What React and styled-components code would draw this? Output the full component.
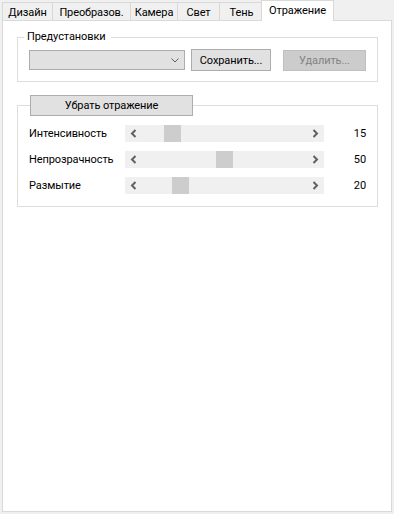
import React from 'react';
import styled, { createGlobalStyle } from 'styled-components';

const GlobalStyle = createGlobalStyle`
  html, body {
    margin: 0;
    padding: 0;
    background: #f0f0f0;
  }
  body {
    color: #000;
    font-family: Roboto, "Noto Sans", sans-serif;
    font-size: 11px;
    letter-spacing: -0.1px;
  }
`;

const Window = styled.div`
  box-sizing: border-box;
  display: flex;
  flex-direction: column;
  height: 514px;
  padding: 0 2px 2px 2px;
  width: 394px;
`;

const TabStrip = styled.div`
  align-items: flex-start;
  display: flex;
  height: 21px;
  margin-bottom: -1px;
  position: relative;
  z-index: 1;
`;

const Tab = styled.div`
  background: ${(p) => (p.$active ? '#fff' : '#f0f0f0')};
  border: 1px solid #d9d9d9;
  border-bottom: none;
  box-sizing: border-box;
  height: ${(p) => (p.$active ? '21px' : '18px')};
  line-height: 19px;
  margin-left: ${(p) => (p.$first ? '0' : p.$active ? '-3px' : '-1px')};
  margin-top: ${(p) => (p.$active ? '0' : '2px')};
  position: relative;
  text-align: center;
  white-space: nowrap;
  width: ${(p) => p.$width}px;
  z-index: ${(p) => (p.$active ? 2 : 1)};
`;

const Panel = styled.div`
  background: #fff;
  border: 1px solid #d9d9d9;
  flex: 1;
  padding: 8px 13px 0 14px;
`;

const GroupBox = styled.fieldset`
  border: 1px solid #dcdcdc;
  margin: 0 0 ${(p) => p.$gap || 0}px 0;
  min-width: 0;
  padding: ${(p) => p.$pad};
`;

const Caption = styled.legend`
  line-height: 16px;
  margin-left: -5px;
  padding: 0 6px 0 3px;
`;

const ButtonLegend = styled.legend`
  margin-left: 1px;
  padding: 0;
`;

const Row = styled.div`
  align-items: center;
  display: flex;
  height: 22px;
`;

const Combo = styled.div`
  align-items: center;
  background: #e1e1e1;
  border: 1px solid #adadad;
  box-sizing: border-box;
  display: flex;
  height: 20px;
  justify-content: flex-end;
  padding-right: 5px;
  width: 156px;
`;

const Button = styled.button`
  background: ${(p) => (p.disabled ? '#cccccc' : '#e1e1e1')};
  border: 1px solid ${(p) => (p.disabled ? '#bfbfbf' : '#adadad')};
  box-sizing: border-box;
  color: ${(p) => (p.disabled ? '#838383' : '#000')};
  font: inherit;
  height: ${(p) => p.$height || 22}px;
  letter-spacing: inherit;
  margin-left: ${(p) => p.$offset || 0}px;
  padding: 0;
  width: ${(p) => p.$width}px;
`;

const Sliders = styled.div`
  display: flex;
  flex-direction: column;
  gap: 9px;
`;

const SliderRow = styled.div`
  align-items: center;
  display: flex;
  height: 17px;
`;

const Label = styled.span`
  width: 96px;
`;

const Track = styled.div`
  background: #f0f0f0;
  display: flex;
  height: 17px;
  width: 199px;
`;

const Arrow = styled.svg`
  display: block;
  flex: none;
`;

const Channel = styled.div`
  flex: 1;
`;

const Thumb = styled.div`
  background: #cdcdcd;
  height: 17px;
  width: 17px;
`;

const Value = styled.span`
  flex: 1;
  text-align: right;
`;

const tabs = [
  { title: 'Дизайн', width: 51 },
  { title: 'Преобразов.', width: 79 },
  { title: 'Камера', width: 48 },
  { title: 'Свет', width: 43 },
  { title: 'Тень', width: 45 },
  { title: 'Отражение', width: 73, active: true },
];

const sliders = [
  { label: 'Интенсивность', value: 15 },
  { label: 'Непрозрачность', value: 50 },
  { label: 'Размытие', value: 20 },
];

function ScrollArrow({ dir }) {
  const pts = dir === 'left' ? '10.5,5 7,8.5 10.5,12' : '6.5,5 10,8.5 6.5,12';
  return (
    <Arrow width="17" height="17" viewBox="0 0 17 17">
      <polyline points={pts} fill="none" stroke="#606060" strokeWidth="2" />
    </Arrow>
  );
}

function Slider({ value }) {
  const offset = Math.round((value / 100) * (165 - 17));
  return (
    <Track>
      <ScrollArrow dir="left" />
      <Channel>
        <Thumb style={{ marginLeft: offset }} />
      </Channel>
      <ScrollArrow dir="right" />
    </Track>
  );
}

export default function App() {
  return (
    <Window>
      <GlobalStyle />
      <TabStrip>
        {tabs.map((t, i) => (
          <Tab key={t.title} $width={t.width} $active={t.active} $first={i === 0}>
            {t.title}
          </Tab>
        ))}
      </TabStrip>
      <Panel>
        <GroupBox $pad="4px 11px 10px 11px" $gap={13}>
          <Caption>Предустановки</Caption>
          <Row>
            <Combo>
              <svg width="8" height="5" viewBox="0 0 8 5">
                <polyline points="0.5,0.5 4,4 7.5,0.5" fill="none" stroke="#606060" strokeWidth="1" />
              </svg>
            </Combo>
            <Button $width={80} $offset={6}>Сохранить...</Button>
            <Button $width={83} $height={21} $offset={12} disabled>Удалить...</Button>
          </Row>
        </GroupBox>
        <GroupBox $pad="9px 11px 12px 11px">
          <ButtonLegend>
            <Button $width={163} $height={21}>Убрать отражение</Button>
          </ButtonLegend>
          <Sliders>
            {sliders.map((s) => (
              <SliderRow key={s.label}>
                <Label>{s.label}</Label>
                <Slider value={s.value} />
                <Value>{s.value}</Value>
              </SliderRow>
            ))}
          </Sliders>
        </GroupBox>
      </Panel>
    </Window>
  );
}
